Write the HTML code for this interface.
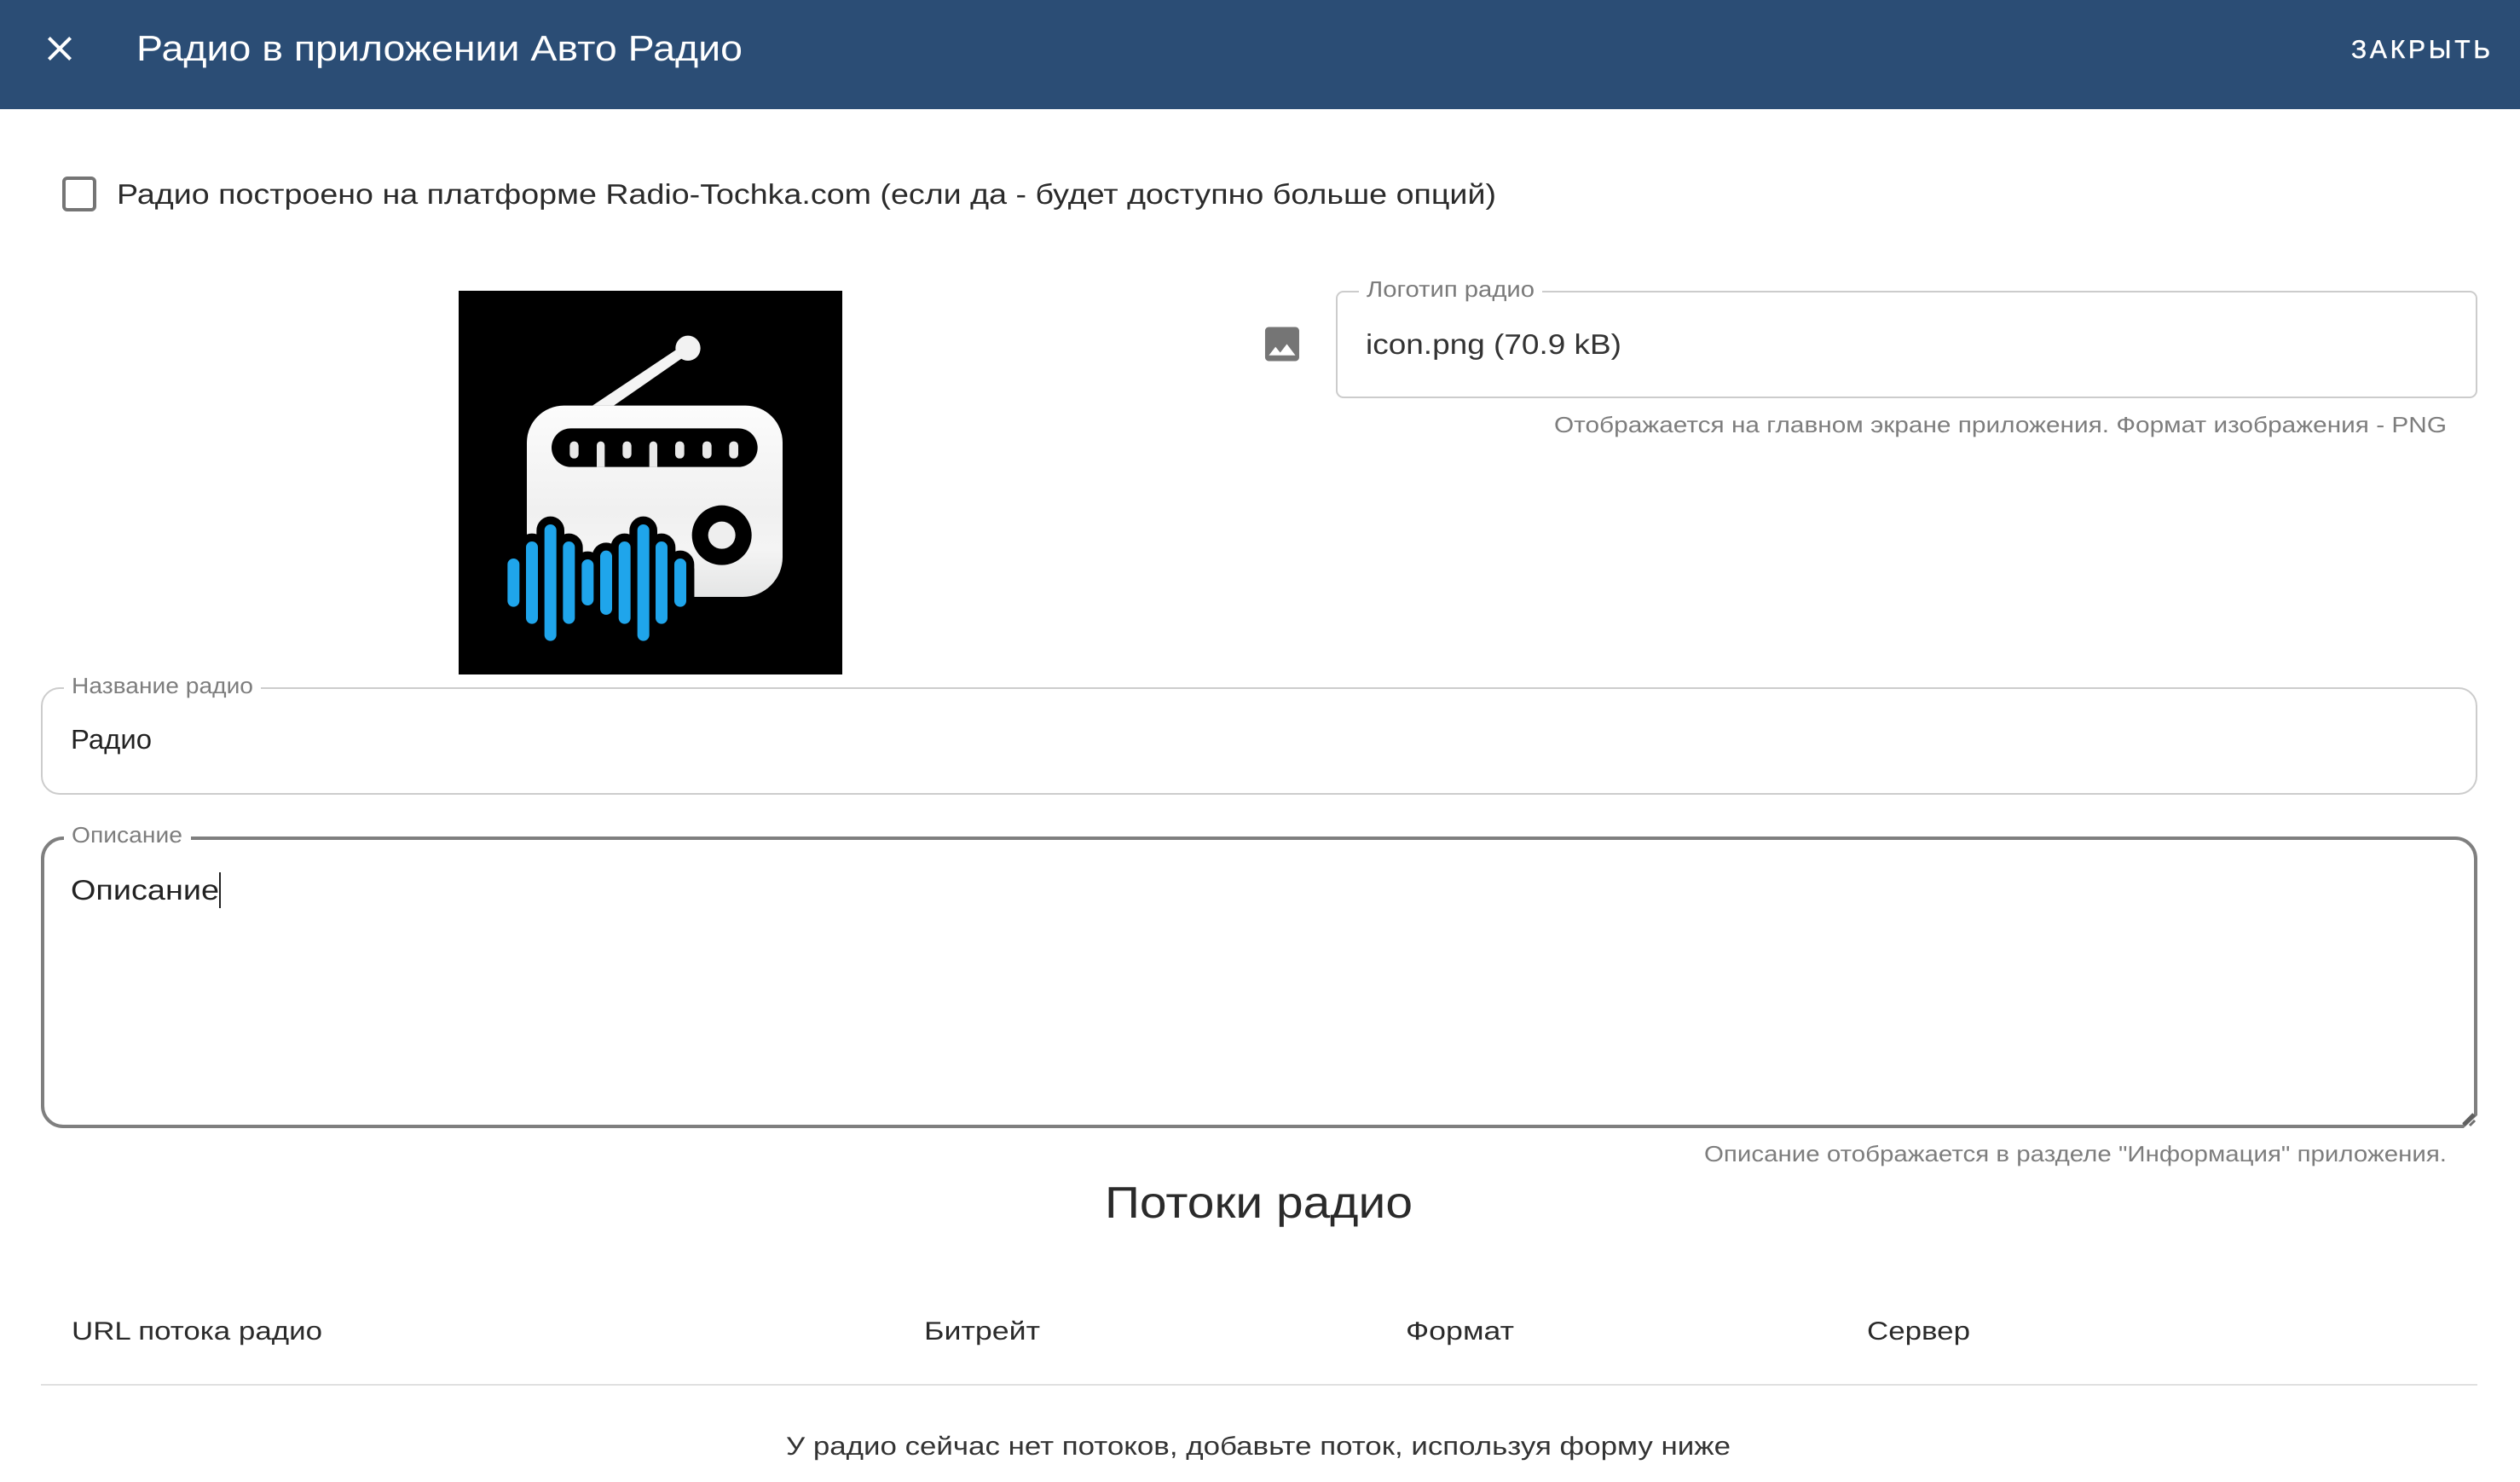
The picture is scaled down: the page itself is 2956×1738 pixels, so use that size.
<!DOCTYPE html>
<html lang="ru">
<head>
<meta charset="utf-8">
<title>Радио в приложении Авто Радио</title>
<style>
html,body{margin:0;padding:0;background:#fff;width:2956px;height:1738px;overflow:hidden}
svg{display:block}
text{font-family:"Liberation Sans","DejaVu Sans",sans-serif;text-rendering:geometricPrecision}
</style>
</head>
<body>
<svg xmlns="http://www.w3.org/2000/svg" width="2956" height="1738" viewBox="0 0 2956 1738">
<defs>
<linearGradient id="b" x1="0" y1="0" x2="0" y2="1">
<stop offset="0" stop-color="#fcfcfc"/><stop offset=".55" stop-color="#f0f0f0"/><stop offset=".75" stop-color="#f4f4f4"/><stop offset="1" stop-color="#e4e5e5"/>
</linearGradient>
</defs>
<rect width="2956" height="1738" fill="#fff"/>

<!-- App bar -->
<rect width="2956" height="128" fill="#2b4d75"/>
<path transform="translate(46 33) scale(2)" fill="#fff" d="M19 6.41 17.59 5 12 10.59 6.41 5 5 6.41 10.59 12 5 17.59 6.41 19 12 13.41 17.59 19 19 17.59 13.41 12z"/>
<text x="160" y="71" font-size="42" fill="#fff" textLength="711" lengthAdjust="spacingAndGlyphs">Радио в приложении Авто Радио</text>
<text x="2758" y="68" font-size="30" fill="#fff" stroke="#fff" stroke-width=".5" textLength="163" lengthAdjust="spacing">ЗАКРЫТЬ</text>

<!-- Checkbox -->
<rect x="75" y="209" width="36" height="37" rx="4" fill="none" stroke="#757575" stroke-width="4"/>
<text x="137" y="239" font-size="33" fill="#2a2a2a" textLength="1618" lengthAdjust="spacingAndGlyphs">Радио построено на платформе Radio-Tochka.com (если да - будет доступно больше опций)</text>

<!-- Logo -->
<rect x="538" y="341" width="450" height="450" fill="#000"/>
<g transform="translate(500 320) scale(.33333)">
<path d="M585 467 880 270 905 297 660 467Z" fill="#f4f4f4"/>
<circle cx="921" cy="265" r="44" fill="#f2f2f2"/>
<path d="M484 467H1124A130 130 0 0 1 1254 597V1000A140 140 0 0 1 1114 1140H354V597A130 130 0 0 1 484 467Z" fill="url(#b)"/>
<rect x="441" y="547" width="725" height="136" rx="68" fill="#000"/>
<g fill="#e9e9e9">
<rect x="505" y="593" width="31" height="60" rx="15"/>
<path d="M600 683V607a14 14 0 0 1 28 0V683Z"/>
<rect x="691" y="593" width="31" height="60" rx="15"/>
<path d="M785 683V607a14 14 0 0 1 28 0V683Z"/>
<rect x="876" y="593" width="32" height="60" rx="15"/>
<rect x="972" y="593" width="32" height="60" rx="15"/>
<rect x="1066" y="593" width="32" height="60" rx="15"/>
</g>
<circle cx="1040" cy="923" r="105" fill="#000"/>
<circle cx="1040" cy="923" r="48" fill="#eeeeee"/>
<rect x="340" y="1040" width="603" height="110" fill="#000"/>
<g stroke="#000" stroke-width="98" stroke-linecap="round" fill="none">
<path d="M307 1026V1154M372 966V1214M437 906V1274M502 966V1214M568 1029V1149M633 998V1182M698 966V1214M764 906V1274M828 966V1214M894 1026V1154"/>
</g>
<g stroke="#1fa5eb" stroke-width="42" stroke-linecap="round" fill="none">
<path d="M307 1026V1154M372 966V1214M437 906V1274M502 966V1214M568 1029V1149M633 998V1182M698 966V1214M764 906V1274M828 966V1214M894 1026V1154"/>
</g>
</g>

<!-- Logo field -->
<path transform="translate(1477.3 376.8) scale(2.222)" fill="#757575" d="M21 19V5c0-1.1-.9-2-2-2H5c-1.1 0-2 .9-2 2v14c0 1.1.9 2 2 2h14c1.1 0 2-.9 2-2zM8.5 13.5l2.5 3.01L14.5 12l4.5 6H5l3.5-4.5z"/>
<rect x="1568" y="342" width="1337" height="124" rx="8" fill="none" stroke="#cccccc" stroke-width="2"/>
<rect x="1594" y="338" width="215" height="8" fill="#fff"/>
<text x="1603" y="348" font-size="26" fill="#7a7a7a" textLength="197" lengthAdjust="spacingAndGlyphs">Логотип радио</text>
<text x="1602" y="415" font-size="33" fill="#333" textLength="300" lengthAdjust="spacingAndGlyphs">icon.png (70.9 kB)</text>
<text x="1823" y="507" font-size="26" fill="#7d7d7d" textLength="1047" lengthAdjust="spacingAndGlyphs">Отображается на главном экране приложения. Формат изображения - PNG</text>

<!-- Name field -->
<rect x="49" y="807" width="2856" height="124" rx="21" fill="none" stroke="#cccccc" stroke-width="2"/>
<rect x="75" y="803" width="231" height="8" fill="#fff"/>
<text x="84" y="813" font-size="26" fill="#7d7d7d" textLength="213" lengthAdjust="spacingAndGlyphs">Название радио</text>
<text x="83" y="878" font-size="32" fill="#222" textLength="95" lengthAdjust="spacingAndGlyphs">Радио</text>

<!-- Description field -->
<path d="M74 983H2880A24 24 0 0 1 2904 1007V1307L2889 1321H74A24 24 0 0 1 50 1297V1007A24 24 0 0 1 74 983Z" fill="none" stroke="#7f7f7f" stroke-width="4"/>
<rect x="75" y="977" width="149" height="12" fill="#fff"/>
<text x="84" y="988" font-size="26" fill="#7d7d7d" textLength="130" lengthAdjust="spacingAndGlyphs">Описание</text>
<text x="83" y="1055" font-size="33" fill="#222" textLength="174" lengthAdjust="spacingAndGlyphs">Описание</text>
<rect x="257" y="1023" width="2" height="42" fill="#222"/>
<path d="M2890 1319 2902 1307" stroke="#606060" stroke-width="5" fill="none"/>
<path d="M2897 1320 2903 1314" stroke="#707070" stroke-width="3" fill="none"/>
<text x="1999" y="1362" font-size="26" fill="#7d7d7d" textLength="871" lengthAdjust="spacingAndGlyphs">Описание отображается в разделе "Информация" приложения.</text>

<!-- Streams -->
<text x="1296" y="1428" font-size="52" fill="#2a2a2a" textLength="361" lengthAdjust="spacingAndGlyphs">Потоки радио</text>
<text x="84" y="1571" font-size="30" fill="#2a2a2a" textLength="294" lengthAdjust="spacingAndGlyphs">URL потока радио</text>
<text x="1084" y="1571" font-size="30" fill="#2a2a2a" textLength="136" lengthAdjust="spacingAndGlyphs">Битрейт</text>
<text x="1649" y="1571" font-size="30" fill="#2a2a2a" textLength="127" lengthAdjust="spacingAndGlyphs">Формат</text>
<text x="2190" y="1571" font-size="30" fill="#2a2a2a" textLength="121" lengthAdjust="spacingAndGlyphs">Сервер</text>
<rect x="48" y="1623" width="2858" height="2" fill="#e0e0e0"/>
<text x="922" y="1706" font-size="30" fill="#333" textLength="1108" lengthAdjust="spacingAndGlyphs">У радио сейчас нет потоков, добавьте поток, используя форму ниже</text>
</svg>
</body>
</html>
